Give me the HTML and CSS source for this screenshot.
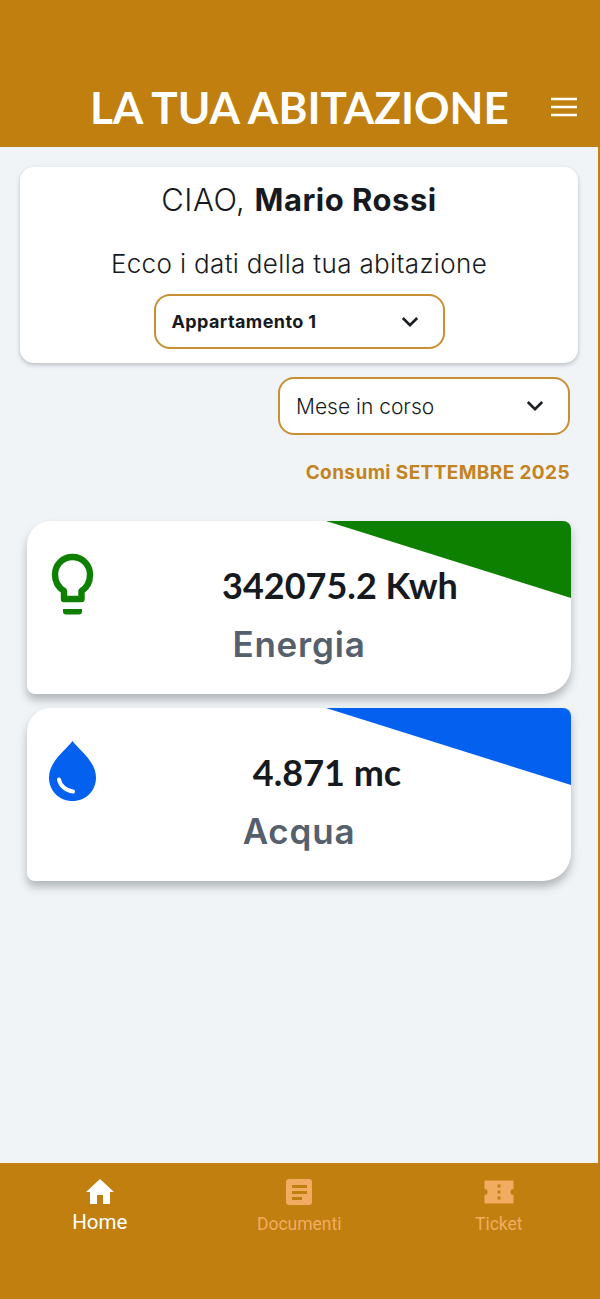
FILE: index.html
```html
<!DOCTYPE html>
<html lang="it">
<head>
<meta charset="utf-8">
<title>La tua abitazione</title>
<link rel="stylesheet" href="styles.css">
</head>
<body>
<div class="app">
  <header class="topbar">
    <h1 class="title">LA TUA ABITAZIONE</h1>
    <button class="menu" aria-label="Menu">
      <svg width="30" height="30" viewBox="0 0 30 30"><path d="M2 7h26M2 15h26M2 23h26" stroke="#fff" stroke-width="2.700" fill="none"/></svg>
    </button>
  </header>
  <main class="content">
    <section class="welcome">
      <p class="hello">CIAO, <strong>Mario Rossi</strong></p>
      <p class="sub">Ecco i dati della tua abitazione</p>
      <div class="select select-home">
        <span>Appartamento 1</span>
        <svg class="chev" width="20" height="20" viewBox="0 0 20 20"><path d="M2.800 6 10 13.200 17.200 6" fill="none" stroke="#1a1d21" stroke-width="2.600"/></svg>
      </div>
    </section>
    <div class="period">
      <div class="select select-month">
        <span>Mese in corso</span>
        <svg class="chev" width="20" height="20" viewBox="0 0 20 20"><path d="M2.800 6 10 13.200 17.200 6" fill="none" stroke="#1a1d21" stroke-width="2.600"/></svg>
      </div>
      <p class="consumi">Consumi SETTEMBRE 2025</p>
    </div>
    <section class="cards">
      <article class="card card-green">
        <span class="corner"></span>
        <svg class="icon" width="50" height="64" viewBox="0 0 50 64"><path d="M16 46V38C10.500 34.500 7 28.500 7 21.500 7 11.500 15 4 24.500 4S42 11.500 42 21.500C42 28.500 39 34.500 33.500 38V46Z" fill="none" stroke="#0e8000" stroke-width="6.400" stroke-linejoin="round"/><path d="M15 56h19v2.500q0 3-3 3H18q-3 0-3-3Z" fill="#0e8000"/></svg>
        <p class="value">342075.2 Kwh</p>
        <p class="label">Energia</p>
      </article>
      <article class="card card-blue">
        <span class="corner"></span>
        <svg class="icon" width="50" height="64" viewBox="0 0 50 64"><path d="M24.500 1C19 9 1 21 1 37.500 1 50.500 11 61 24.500 61S48 50.500 48 37.500C48 21 30 9 24.500 1Z" fill="#0460ee"/><path d="M11 39.500C12 45.500 18 51 25 51.500" fill="none" stroke="#fff" stroke-width="4" stroke-linecap="round"/></svg>
        <p class="value">4.871 mc</p>
        <p class="label">Acqua</p>
      </article>
    </section>
  </main>
  <nav class="tabs">
    <a class="tab tab-active">
      <svg width="32" height="28" viewBox="0 0 32 28"><path d="M16 1 2 14h4v12h7v-9h6v9h7V14h4Z" fill="#fff"/></svg>
      <span>Home</span>
    </a>
    <a class="tab">
      <svg width="32" height="28" viewBox="0 0 32 28"><rect x="3" y="1" width="26" height="26" rx="3" fill="#f2ac62"/><path d="M9 7h15v3H9ZM9 13h15v3H9ZM9 19h10v3H9Z" fill="#c07f0f"/></svg>
      <span>Documenti</span>
    </a>
    <a class="tab">
      <svg width="32" height="28" viewBox="0 0 32 28"><path d="M1.500 2.500h29V11a3 3 0 0 0 0 6v8.500h-29V17a3 3 0 0 0 0-6Z" fill="#f2ac62"/><path d="M14.500 6.500h3v3h-3ZM14.500 12.500h3v3h-3ZM14.500 18.500h3v3h-3Z" fill="#c07f0f"/></svg>
      <span>Ticket</span>
    </a>
  </nav>
</div>
</body>
</html>
```
FILE: styles.css
```css
* { box-sizing: border-box; }
html, body { margin: 0; padding: 0; }
body { width: 600px; height: 1299px; overflow: hidden; background: #f0f4f7; font-family: Inter, "Open Sans", sans-serif; color: #16191d; }
p, h1 { margin: 0; }
.app { width: 600px; height: 1299px; display: flex; flex-direction: column; border-right: 2px solid #c07f0f; }
.topbar { height: 147px; margin-right: -2px; background: #c07f0f; display: flex; align-items: flex-end; padding: 0 21px 13px 90px; justify-content: space-between; flex: none; }
.title { font: 700 44px/54px Lato, sans-serif; color: #fff; white-space: nowrap; }
.menu { border: 0; background: none; padding: 0; width: 30px; height: 30px; margin-bottom: 12px; }
.content { flex: 1; padding: 20px 0 0 0; }
.welcome { margin: 0 20px; width: 558px; height: 196px; background: #fff; border-radius: 14px; box-shadow: 0 2px 4px rgba(60,64,70,.3); padding-top: 14px; display: flex; flex-direction: column; align-items: center; }
.hello { font-size: 31px; line-height: 38px; font-weight: 300; letter-spacing: 0.5px; }
.hello strong { font-weight: 700; }
.sub { font-size: 26px; line-height: 32px; font-weight: 300; margin-top: 29px; letter-spacing: 0.35px; }
.select { display: flex; align-items: center; justify-content: space-between; background: #fff; border: 2px solid #c98f35; border-radius: 16px; width: 291px; }
.select-home { height: 55px; margin-top: 14px; padding: 0 23px 0 16px; font-size: 18px; font-weight: 700; letter-spacing: 0.4px; }
.period { display: flex; flex-direction: column; align-items: flex-end; padding-right: 28px; margin-top: 14px; }
.select-month { width: 292px; height: 58px; padding: 0 23px 0 16px; font-size: 21px; font-weight: 300; }
.consumi { font-size: 19px; line-height: 24px; font-weight: 700; color: #c38320; margin-top: 26px; letter-spacing: 0.4px; }
.cards { margin: 36px 27px 0 27px; display: flex; flex-direction: column; gap: 14px; }
.card { position: relative; height: 173px; background: #fff; border-radius: 24px 8px 28px 8px; box-shadow: 0 6px 8px rgba(70,74,80,.36); display: flex; flex-direction: column; align-items: center; overflow: visible; }
.corner { position: absolute; top: 0; right: 0; width: 245px; height: 77px; clip-path: polygon(0 0, 100% 0, 100% 100%); border-top-right-radius: 8px; }
.card-green .corner { background: #0e8000; }
.card-blue .corner { background: #0460ee; }
.icon { position: absolute; left: 21px; top: 32px; }
.value { font: 700 36px/44px Lato, sans-serif; margin-top: 42px; position: relative; color: #16191d; }
.card-green .value { margin-left: 82px; }
.card-blue .value { margin-left: 56px; }
.label { font-size: 35px; line-height: 44px; font-weight: 600; color: #55606c; margin-top: 15px; letter-spacing: 0.8px; }
.tabs { height: 136px; margin-right: -2px; background: #c07f0f; display: grid; grid-template-columns: repeat(3, 199.500px); flex: none; }
.tab { display: flex; flex-direction: column; align-items: center; padding-top: 15px; font: 400 17.500px/20px Roboto, sans-serif; color: #f2ac62; }
.tab span { margin-top: 8px; }
.tab-active { color: #fff; font-size: 20.500px; }
.tab-active span { margin-top: 6px; }
```
